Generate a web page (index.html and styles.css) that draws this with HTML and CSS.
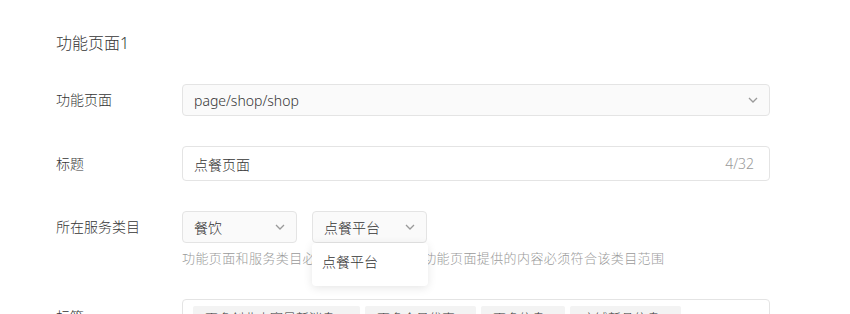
FILE: index.html
```html
<!doctype html>
<html lang="zh-CN">
<head>
    <meta charset="UTF-8">
    <meta name="viewport" content="width=device-width, initial-scale=1.0">
    <title>功能页面</title>
    <link rel="stylesheet" href="styles.css">
</head>
<body>
<div class="page">
    <h3 class="page-title">功能页面1</h3>

    <div class="row">
        <label class="row-label">功能页面</label>
        <div class="select select-wide">
            <span>page/shop/shop</span>
            <svg class="arrow" viewBox="0 0 10 6" width="10" height="6"><path d="M1 1l4 4 4-4" fill="none" stroke="#9a9a9a" stroke-width="1.3"/></svg>
        </div>
    </div>

    <div class="row">
        <label class="row-label row-label-input">标题</label>
        <div class="input">
            <span>点餐页面</span>
            <span class="counter">4/32</span>
        </div>
    </div>

    <div class="row row-category">
        <label class="row-label">所在服务类目</label>
        <div>
            <div class="select-group">
                <div class="select select-small">
                    <span>餐饮</span>
                    <svg class="arrow" viewBox="0 0 10 6" width="10" height="6"><path d="M1 1l4 4 4-4" fill="none" stroke="#9a9a9a" stroke-width="1.3"/></svg>
                </div>
                <div class="select select-small select-open">
                    <span>点餐平台</span>
                    <svg class="arrow" viewBox="0 0 10 6" width="10" height="6"><path d="M1 1l4 4 4-4" fill="none" stroke="#9a9a9a" stroke-width="1.3"/></svg>
                    <ul class="dropdown">
                        <li>点餐平台</li>
                    </ul>
                </div>
            </div>
            <p class="hint">功能页面和服务类目必须一一对应，并且功能页面提供的内容必须符合该类目范围</p>
        </div>
    </div>

    <div class="row">
        <label class="row-label row-label-tags">标签</label>
        <div class="tags">
            <span class="tag tag-1">更多创业大赛最新消息</span>
            <span class="tag tag-2">更多会员优惠</span>
            <span class="tag tag-3">更多信息</span>
            <span class="tag tag-4">店铺新品信息</span>
        </div>
    </div>
</div>
</body>
</html>
```

FILE: styles.css
```css
body {
    margin: 0;
    background-color: #fff;
    font-family: "Noto Sans", "Noto Sans CJK SC", sans-serif;
    font-weight: 300;
    color: #353535;
    font-size: 14px;
    overflow: hidden;
}

.page {
    padding: 32px 0 0 56px;
}

.page-title {
    margin: 0 0 30px;
    font-size: 16px;
    font-weight: 300;
    line-height: 22px;
}

.row {
    display: grid;
    grid-template-columns: 126px 588px;
    align-items: start;
    margin-bottom: 30px;
}

.row-category {
    margin-bottom: 32px;
}

.row-label {
    line-height: 32px;
    font-size: 14px;
}

.row-label-input {
    line-height: 35px;
}

.row-label-tags {
    line-height: 36px;
}

.select {
    display: flex;
    align-items: center;
    justify-content: space-between;
    box-sizing: border-box;
    height: 32px;
    padding: 0 11px;
    border: 1px solid #e4e4e4;
    border-radius: 4px;
    background-color: #fafafa;
}

.select-group {
    display: flex;
    gap: 15px;
}

.select-small {
    width: 115px;
}

.select-open {
    position: relative;
}

.arrow {
    display: block;
}

.dropdown {
    position: absolute;
    top: 31px;
    left: -1px;
    width: 116px;
    margin: 0;
    padding: 4px 0 9px;
    list-style: none;
    background-color: #fff;
    border-radius: 4px;
    box-shadow: 0 2px 10px rgba(0, 0, 0, 0.1);
    z-index: 2;
}

.dropdown li {
    line-height: 30px;
    padding: 0 10px;
}

.input {
    display: flex;
    align-items: center;
    justify-content: space-between;
    box-sizing: border-box;
    height: 35px;
    padding: 0 15px 0 11px;
    border: 1px solid #e4e4e4;
    border-radius: 4px;
    background-color: #fff;
}

.counter {
    color: #9a9a9a;
}

.hint {
    margin: 6px 0 0;
    font-size: 13px;
    line-height: 18px;
    letter-spacing: 0.4px;
    color: #9a9a9a;
}

.tags {
    display: flex;
    gap: 5px;
    box-sizing: border-box;
    padding: 6px 10px;
    border: 1px solid #e4e4e4;
    border-radius: 4px;
}

.tag {
    box-sizing: border-box;
    height: 24px;
    padding: 0 12px;
    line-height: 24px;
    font-size: 13px;
    background-color: #f3f3f3;
    border-radius: 2px;
    white-space: nowrap;
    overflow: hidden;
}

.tag-1 { width: 167px; }
.tag-2 { width: 111px; }
.tag-3 { width: 84px; }
.tag-4 { width: 111px; }
```
